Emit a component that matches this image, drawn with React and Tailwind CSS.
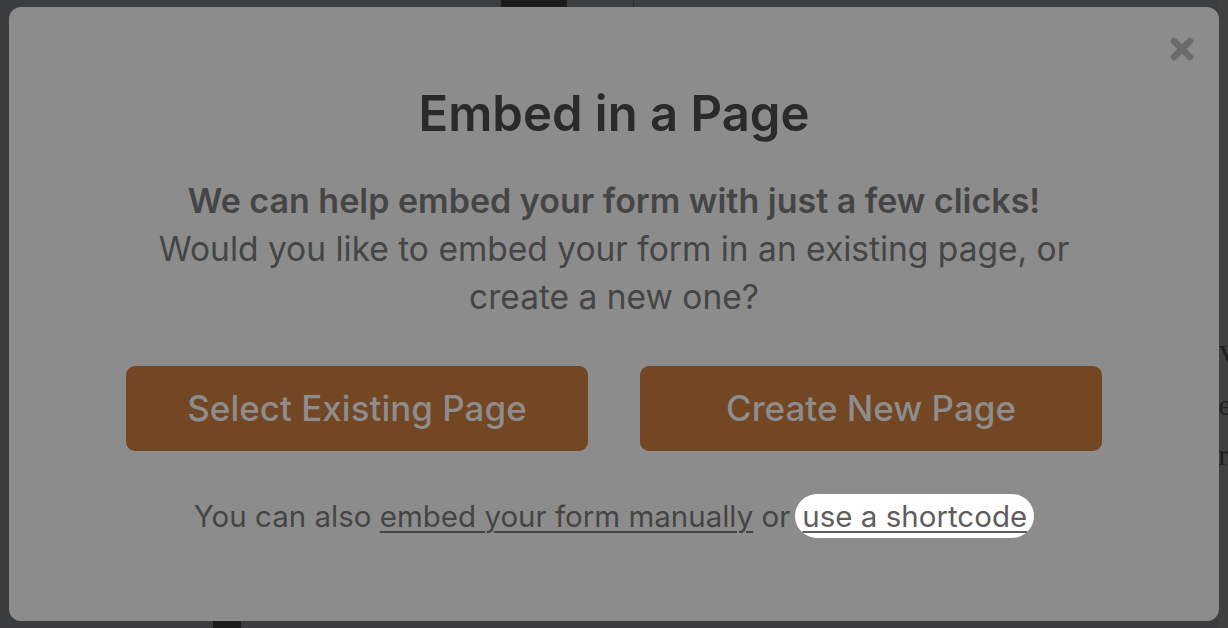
import { X } from "lucide-react";

const App = () => {
  return (
    <div className="relative h-[628px] w-[1228px] overflow-hidden bg-[#3c3d3f] px-[9px] pt-[7px] pb-[7px] font-['Inter',sans-serif]">
      {/* bits of the page behind the overlay */}
      <div className="absolute left-[501px] top-0 h-[7px] w-[66px] bg-[#1c1c1c]" />
      <div className="absolute left-[633px] top-0 h-[7px] w-px bg-[#2e2e2e]" />
      <div className="absolute left-[213px] bottom-0 h-[7px] w-[28px] bg-[#1c1c1c]" />
      <div className="absolute right-0 top-0 h-full w-[9px] bg-[#404040]" />
      <div className="absolute right-[-12px] top-[330px] font-['Liberation_Serif',serif] text-[30px] leading-[50px] text-[#1e1e1e]">
        <div>V</div>
        <div>e</div>
        <div>r</div>
      </div>

      {/* Modal */}
      <div className="relative flex h-[614px] w-[1210px] flex-col items-center rounded-[12px] bg-[#8c8c8c]">
        <button className="absolute right-[21px] top-[26px] text-[#6b6b6b]">
          <X size={32} strokeWidth={5} strokeLinecap="round" />
        </button>

        <h1 className="mt-[77px] text-[49px] font-semibold leading-[60px] text-[#2a2a2a]">
          Embed in a Page
        </h1>

        <div className="mt-[33px] text-center leading-[48px] text-[#454545]">
          <p className="text-[34px] font-semibold">We can help embed your form with just a few clicks!</p>
          <p className="text-[33.5px]">Would you like to embed your form in an existing page, or</p>
          <p className="text-[33.5px]">create a new one?</p>
        </div>

        <div className="mt-[45px] flex gap-[52px]">
          <button className="h-[85px] w-[462px] rounded-[9px] bg-[#734624] text-[35px] font-medium text-[#8d8d8d]">
            Select Existing Page
          </button>
          <button className="h-[85px] w-[462px] rounded-[9px] bg-[#734624] text-[35px] font-medium text-[#8d8d8d]">
            Create New Page
          </button>
        </div>

        <p className="mt-[43px] flex items-center text-[29.5px] leading-[44px] text-[#454545]">
          <span>You can also&nbsp;</span>
          <a className="underline decoration-2 underline-offset-4">embed your form manually</a>
          <span>&nbsp;or</span>
          <a className="ml-[5px] rounded-full bg-white px-[7px] text-[#5e5e5e] underline decoration-2 underline-offset-4">
            use a shortcode
          </a>
        </p>
      </div>
    </div>
  );
};

export default App;
